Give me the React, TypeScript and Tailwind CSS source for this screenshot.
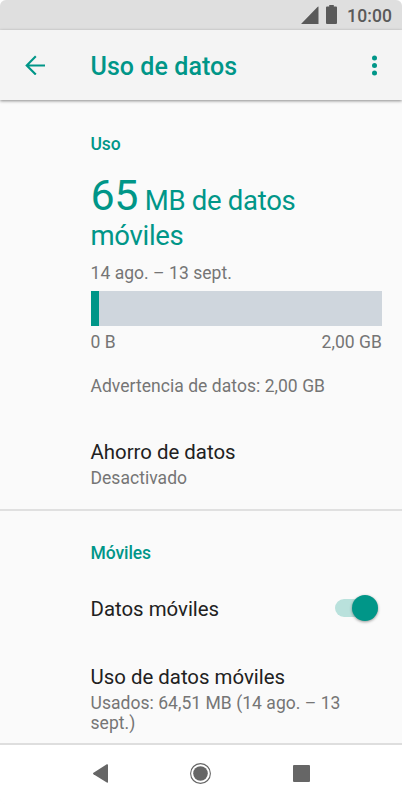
import type { ReactNode } from "react";

function SectionTitle({ children }: { children: ReactNode }) {
    return <h2 className="text-[17.5px] leading-5 font-medium tracking-[-0.08px] text-[#009688]">{children}</h2>;
}

function StatusBar() {
    return (
        <div className="flex h-[30px] shrink-0 items-center justify-end bg-[#dfdfdf] pr-[10px] text-[#5a5a5a]">
            <svg className="h-[18px] w-[18px]" viewBox="0 0 18 18" fill="currentColor">
                <path d="M17.5 .8v17.2a.5.5 0 0 1-.5.5H.8q-1-.3-.3-1L16.500 1q.8-.7 1-.2z" />
            </svg>
            <svg className="mb-px ml-[7px] h-[19px] w-[11px]" viewBox="0 0 11 19" fill="currentColor">
                <path d="M3.200 0h4.600v1.400H10q1 0 1 1V18q0 1-1 1H1q-1 0-1-1V2.400q0-1 1-1h2.200z" />
            </svg>
            <span className="mt-px ml-[10px] text-[17.5px] leading-5 font-medium tracking-[0.1px]">10:00</span>
        </div>
    );
}

function Header() {
    return (
        <header className="relative flex h-[70px] shrink-0 items-center bg-[#f4f4f4] pr-[25px] pl-[25px] text-[#009688] shadow-[0_1px_3px_rgba(0,0,0,0.45)]">
            <svg className="h-5 w-5" viewBox="0 0 20 20" fill="none" stroke="currentColor" strokeWidth="2.100">
                <path d="M20 10.500H2M10.800 1.200L1.700 10.500l9.100 9.100" />
            </svg>
            <h1 className="mt-[3px] ml-[45.5px] flex-1 text-[25px] leading-[30px] font-medium tracking-[0.06px]">Uso de datos</h1>
            <svg className="h-[21px] w-[5px]" viewBox="0 0 5 21" fill="currentColor">
                <circle cx="2.500" cy="3" r="2.500" />
                <circle cx="2.500" cy="10.500" r="2.500" />
                <circle cx="2.500" cy="18" r="2.500" />
            </svg>
        </header>
    );
}

function Usage() {
    return (
        <section className="pr-5 pl-[90.5px] pt-[34px] pb-[21px] text-[17.5px] leading-5 tracking-[0.04px] text-[#757575]">
            <SectionTitle>Uso</SectionTitle>
            <p className="mt-[29px] text-[27.5px] leading-[35px] tracking-[-0.3px] text-[#009688]">
                <span className="text-[43px] leading-[0px]">65</span> MB de datos
                <br />
                móviles
            </p>
            <p className="mt-[10px]">14 ago. – 13 sept.</p>
            <div className="mt-2 h-[35px] bg-[#cfd6dd]">
                <div className="h-full w-[8.5px] bg-[#009688]" />
            </div>
            <div className="mt-[6px] flex justify-between">
                <span>0 B</span>
                <span>2,00 GB</span>
            </div>
            <p className="mt-6">Advertencia de datos: 2,00 GB</p>
            <h3 className="mt-11 text-[20.4px] leading-6 tracking-normal text-[#212121]">Ahorro de datos</h3>
            <p className="mt-1">Desactivado</p>
        </section>
    );
}

function Mobile() {
    return (
        <section className="flex-1 border-t-2 border-[#e0e0e0] pr-6 pl-[90.5px] pt-8 text-[17.5px] leading-5 tracking-[0.04px] text-[#757575]">
            <SectionTitle>Móviles</SectionTitle>
            <div className="mt-8 flex items-center justify-between">
                <h3 className="pt-[2px] text-[20.4px] leading-6 tracking-normal text-[#212121]">Datos móviles</h3>
                <div className="flex h-[18px] w-[43px] items-center justify-end rounded-full bg-[#b9e1dc]">
                    <div className="h-[26px] w-[26px] shrink-0 rounded-full bg-[#009688] shadow-[0_1px_3px_rgba(0,0,0,0.4)]" />
                </div>
            </div>
            <h3 className="mt-11 text-[20.4px] leading-6 tracking-normal text-[#212121]">Uso de datos móviles</h3>
            <p className="mt-1">
                Usados: 64,51 MB (14 ago. – 13
                <br />
                sept.)
            </p>
        </section>
    );
}

function NavBar() {
    return (
        <nav className="flex h-[61px] shrink-0 items-center border-t-2 border-[#dedede] bg-white pb-[2px] pl-[93px] text-[#666666]">
            <svg className="h-[19px] w-[15px]" viewBox="0 0 15 19" fill="currentColor">
                <path d="M13.800 .2Q15 0 15 1v17q0 1-1.200.6L.5 10.200q-1-.7 0-1.400z" />
            </svg>
            <svg className="ml-[82px] h-[21px] w-[21px]" viewBox="0 0 21 21" fill="currentColor">
                <circle cx="10.500" cy="10.500" r="9.900" fill="none" stroke="currentColor" strokeWidth="1.100" />
                <circle cx="10.500" cy="10.500" r="7.300" />
            </svg>
            <div className="ml-[82px] h-[17px] w-[17px] rounded-[1px] bg-[#666666]" />
        </nav>
    );
}

export default function App() {
    return (
        <div className="h-[804px] w-[402px] bg-white font-[Roboto,sans-serif]">
            <div className="flex h-full flex-col overflow-hidden rounded-[6px] bg-[#fafafa]">
                <StatusBar />
                <Header />
                <Usage />
                <Mobile />
                <NavBar />
            </div>
        </div>
    );
}
